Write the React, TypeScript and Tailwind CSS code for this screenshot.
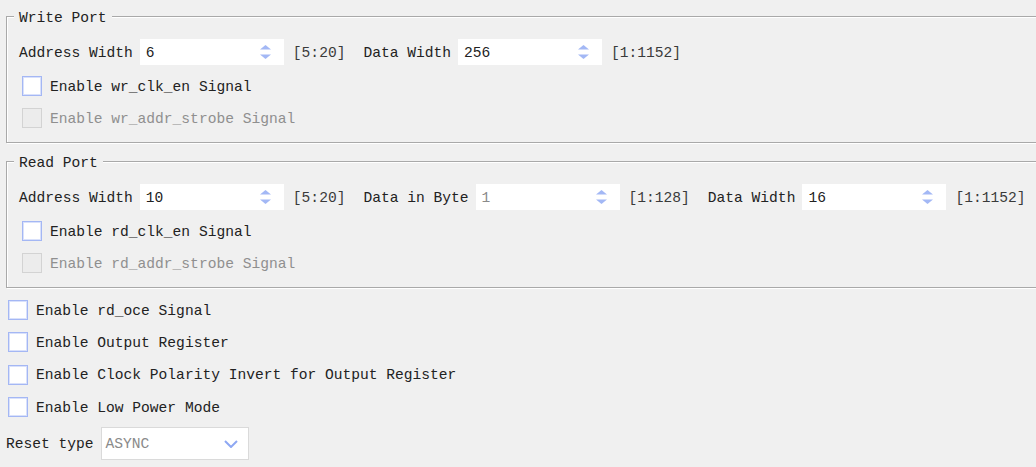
import React from 'react';

const font = "font-['Liberation_Mono','Courier_New',monospace] text-[14.6px]";

function Spinner() {
    return (
        <svg width="11" height="14" viewBox="0 0 11 14" className="shrink-0">
            <polygon points="5.5,0 11,4.5 0,4.5" fill="#a3b8f5" />
            <polygon points="0,9.5 11,9.5 5.5,14" fill="#a3b8f5" />
        </svg>
    );
}

function SpinBox({ value, disabled }: { value: string; disabled?: boolean }) {
    return (
        <div className="w-[144px] h-[26px] bg-white flex items-center pl-[6px] pr-[13px] shrink-0">
            <span className={`flex-1 pt-[3px] ${disabled ? 'text-[#8a8a8a]' : 'text-[#222]'}`}>{value}</span>
            <Spinner />
        </div>
    );
}

function Field({ label, value, range, disabled }: { label: string; value: string; range: string; disabled?: boolean }) {
    return (
        <div className="flex items-center mr-[18px]">
            <span className="text-[#222] mr-[7px] pt-[3px] whitespace-pre">{label}</span>
            <SpinBox value={value} disabled={disabled} />
            <span className="text-[#3a3a3a] ml-[9px] pt-[3px] whitespace-pre">{range}</span>
        </div>
    );
}

function Check({ label, disabled }: { label: string; disabled?: boolean }) {
    return (
        <label className="flex items-center h-[20px]">
            <span
                className={`w-[20px] h-[20px] shrink-0 border ${disabled
                    ? 'border-[#d3d3d3] bg-[#ececec]'
                    : 'border-[#a4b7f4] bg-white shadow-[inset_0_0_0_1px_#d9e1fb]'
                    }`}
            />
            <span className={`ml-[8px] pt-[3px] whitespace-pre ${disabled ? 'text-[#8f8f8f]' : 'text-[#222]'}`}>{label}</span>
        </label>
    );
}

function Group({ title, children, wr }: { title: string; children: React.ReactNode; wr: string }) {
    return (
        <div className="relative ml-[6px] w-[1040px] h-[127px] border border-[#a9a9a9] shadow-[inset_1px_1px_0_#fff,1px_1px_0_#fff]">
            <span className="absolute left-[7px] top-[-9px] leading-[20px] px-[5px] bg-[#f0f0f0] text-[#222]">{title}</span>
            <div className="pt-[22px] pl-[12px]">
                <div className="flex items-center h-[26px]">{children}</div>
                <div className="pl-[3px] mt-[11px]">
                    <Check label={`Enable ${wr}_clk_en Signal`} />
                </div>
                <div className="pl-[3px] mt-[12px]">
                    <Check label={`Enable ${wr}_addr_strobe Signal`} disabled />
                </div>
            </div>
        </div>
    );
}

export default function App() {
    return (
        <div className={`w-[1036px] h-[467px] overflow-hidden bg-[#f0f0f0] pt-[16px] ${font}`}>
            <Group title="Write Port" wr="wr">
                <Field label="Address Width" value="6" range="[5:20]" />
                <Field label="Data Width" value="256" range="[1:1152]" />
            </Group>

            <div className="mt-[18px]">
                <Group title="Read Port" wr="rd">
                    <Field label="Address Width" value="10" range="[5:20]" />
                    <Field label="Data in Byte" value="1" range="[1:128]" disabled />
                    <Field label="Data Width" value="16" range="[1:1152]" />
                </Group>
            </div>

            <div className="flex flex-col gap-[12.4px] pl-[8px] mt-[12px]">
                <Check label="Enable rd_oce Signal" />
                <Check label="Enable Output Register" />
                <Check label="Enable Clock Polarity Invert for Output Register" />
                <Check label="Enable Low Power Mode" />
            </div>

            <div className="flex items-center pl-[6px] mt-[10px]">
                <span className="text-[#222] mr-[7px] pt-[3px]">Reset type</span>
                <div className="w-[148px] h-[33px] bg-white border border-[#dadada] flex items-center pl-[4px] pr-[10px]">
                    <span className="flex-1 pt-[3px] text-[#8a8a8a]">ASYNC</span>
                    <svg width="14" height="8" viewBox="0 0 14 8">
                        <path d="M1 1 L7 7 L13 1" fill="none" stroke="#8ea8f3" strokeWidth="2" />
                    </svg>
                </div>
            </div>
        </div>
    );
}
